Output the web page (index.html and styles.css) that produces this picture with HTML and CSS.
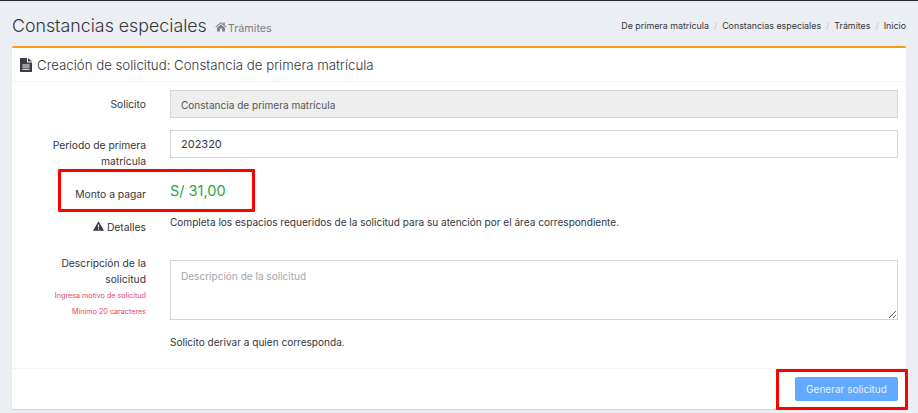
FILE: index.html
```html
<!DOCTYPE html>
<html lang="es">
<head>
<meta charset="utf-8">
<title>Constancias especiales</title>
<link rel="stylesheet" href="styles.css">
</head>
<body>
<header class="page-head">
  <h1 class="page-title">Constancias especiales
    <small class="page-sub">
      <svg class="icon-home" viewBox="0 0 16 14"><path d="M8 1 0.5 7.4l.8.9L8 2.6l6.7 5.7.8-.9L13 5.2V1.6h-2v1.9zM2.8 8.6V13.5h3.7V9.8h3v3.7h3.7V8.6L8 4.2z"/></svg>
      Trámites
    </small>
  </h1>
  <ol class="crumbs">
    <li>De primera matrícula</li>
    <li>Constancias especiales</li>
    <li>Trámites</li>
    <li>Inicio</li>
  </ol>
</header>
<main class="card">
  <div class="card-head">
    <svg class="icon-file" viewBox="0 0 12 14"><path fill-rule="evenodd" d="M0 0h7v4.4h5V14H0zM8 0l4 3.4H8zM2.4 6.4v1h7.2v-1zM2.4 8.6v1h7.2v-1zM2.4 10.8v1h7.2v-1z"/></svg>
    <h2 class="card-title">Creación de solicitud: Constancia de primera matrícula</h2>
  </div>
  <form class="form">
    <div class="row row-solicito">
      <label class="label label-center">Solicito</label>
      <div class="field"><input class="input input-disabled" value="Constancia de primera matrícula" disabled></div>
    </div>
    <div class="row row-periodo">
      <label class="label label-periodo">Periodo de primera matrícula</label>
      <div class="field"><input class="input input-value" value="202320"></div>
    </div>
    <div class="row row-monto">
      <label class="label">Monto a pagar</label>
      <div class="amount">S/ 31,00</div>
    </div>
    <div class="row row-detalles">
      <div class="label label-detalles">
        <svg class="icon-warn" viewBox="0 0 14 12"><path fill-rule="evenodd" d="M7 0 14 12H0zM6.2 4v4h1.6V4zM6.2 9v1.5h1.6V9z"/></svg>
        Detalles
      </div>
      <p class="note note-detalles">Completa los espacios requeridos de la solicitud para su atención por el área correspondiente.</p>
    </div>
    <div class="row row-desc">
      <div class="label">
        <label class="label-desc">Descripción de la solicitud</label>
        <p class="hint hint-a">Ingresa motivo de solicitud</p>
        <p class="hint hint-b">Mínimo 20 caracteres</p>
      </div>
      <div class="field field-desc">
        <textarea class="textarea" placeholder="Descripción de la solicitud"></textarea>
        <p class="note note-after">Solicito derivar a quien corresponda.</p>
      </div>
    </div>
  </form>
  <div class="card-foot">
    <button class="btn" type="button">Generar solicitud</button>
  </div>
</main>
<div class="mark mark-amount"></div>
<div class="mark mark-btn"></div>
</body>
</html>
```
FILE: styles.css
```css
* { box-sizing: border-box; }
html, body { height: 100%; }
body {
  margin: 0;
  height: 413px;
  overflow: hidden;
  background: #ebeef3;
  border-top: 1px solid #1f2933;
  font-family: "Inter", "Lato", sans-serif;
  color: #33363d;
  position: relative;
}
.page-head {
  display: flex;
  justify-content: space-between;
  align-items: flex-start;
  height: 45px;
  padding: 14px 12px 0;
}
.page-title {
  margin: 0;
  font-size: 17.8px;
  font-weight: 300;
  line-height: 22px;
  color: #33363d;
  white-space: nowrap;
}
.page-sub {
  font-size: 10.8px;
  font-weight: 400;
  color: #7b7f86;
  margin-left: 3px;
  word-spacing: -2px;
}
.icon-home { width: 12px; height: 11px; fill: #7b7f86; }
.crumbs {
  list-style: none;
  display: flex;
  margin: 4px 0 0;
  padding: 0;
  font-size: 8.9px;
  line-height: 14px;
  color: #33363d;
}
.crumbs li + li::before {
  content: "/";
  color: #c4c8ce;
  padding: 0 5px;
}
.card {
  margin: 0 12px;
  height: 363px;
  background: #fff;
  border-top: 2px solid #f39c12;
  border-radius: 2px;
  box-shadow: 0 1px 1px rgba(0,0,0,.12);
  display: flex;
  flex-direction: column;
}
.card-head {
  display: flex;
  align-items: center;
  gap: 5px;
  height: 34px;
  padding: 0 8px;
  border-bottom: 1px solid #f2f2f4;
}
.icon-file { width: 12px; height: 14px; fill: #3b3f46; flex: none; }
.card-title {
  margin: 0;
  font-size: 13.25px;
  font-weight: 300;
  color: #33363d;
  white-space: nowrap;
}
.form {
  flex: 1;
  padding: 8px 8px 0 12px;
}
.row {
  display: grid;
  grid-template-columns: 122px 1fr;
  column-gap: 24px;
}
.label {
  font-size: 10.3px;
  line-height: 16px;
  text-align: right;
  font-weight: 400;
  color: #33363d;
}
.label-center { align-self: center; }
.label-periodo { padding-top: 7px; }
.row-periodo { margin-top: 12px; height: 46px; }
.row-monto { margin-top: 2px; height: 35px; align-items: start; }
.row-monto .label { padding-top: 8px; }
.row-detalles { height: 42px; }
.label-detalles { margin-top: 6px; }
.icon-warn { width: 11px; height: 10px; fill: #33363d; }
.input {
  display: block;
  width: 100%;
  height: 28px;
  padding: 0 10px;
  border: 1px solid #d2d6de;
  background: #fff;
  font-family: inherit;
  color: #33363d;
}
.input-disabled { background: #eeeeee; font-size: 10.05px; color: #555; padding-top: 1px; }
.input-value { font-size: 11px; }
.amount {
  font-size: 14.5px;
  line-height: 20px;
  color: #28a745;
  padding-top: 3px;
}
.note {
  margin: 0;
  font-size: 10.05px;
  line-height: 16px;
  color: #33363d;
}
.note-detalles { padding-top: 1px; }
.label-desc { display: block; }
.hint {
  margin: 0;
  font-size: 7.2px;
  line-height: 16px;
  color: #e83e6c;
}
.hint-a { margin-top: 1px; }
.field-desc { padding-top: 5px; }
.textarea {
  display: block;
  width: 100%;
  height: 60px;
  padding: 9px 10px;
  border: 1px solid #d2d6de;
  font-family: inherit;
  font-size: 10.05px;
  color: #33363d;
  border-radius: 0;
}
.textarea::placeholder { color: #a4a6ab; opacity: 1; }
.note-after { margin-top: 14px; }
.card-foot {
  height: 41px;
  flex: none;
  display: flex;
  justify-content: flex-end;
  align-items: flex-start;
  padding: 8px 8px 0;
  border-top: 1px solid #f2f2f4;
}
.btn {
  width: 103px;
  height: 24px;
  padding: 0;
  border: 1px solid #62a8f0;
  border-radius: 2px;
  background: #62aaff;
  color: #e8f2ff;
  font-family: inherit;
  font-size: 10.05px;
}
.mark {
  position: absolute;
  border: 3px solid #f00;
  border-radius: 1px;
}
.mark-amount { left: 58px; top: 168px; width: 197px; height: 43px; }
.mark-btn { left: 776px; top: 368px; width: 132px; height: 41px; }
```
